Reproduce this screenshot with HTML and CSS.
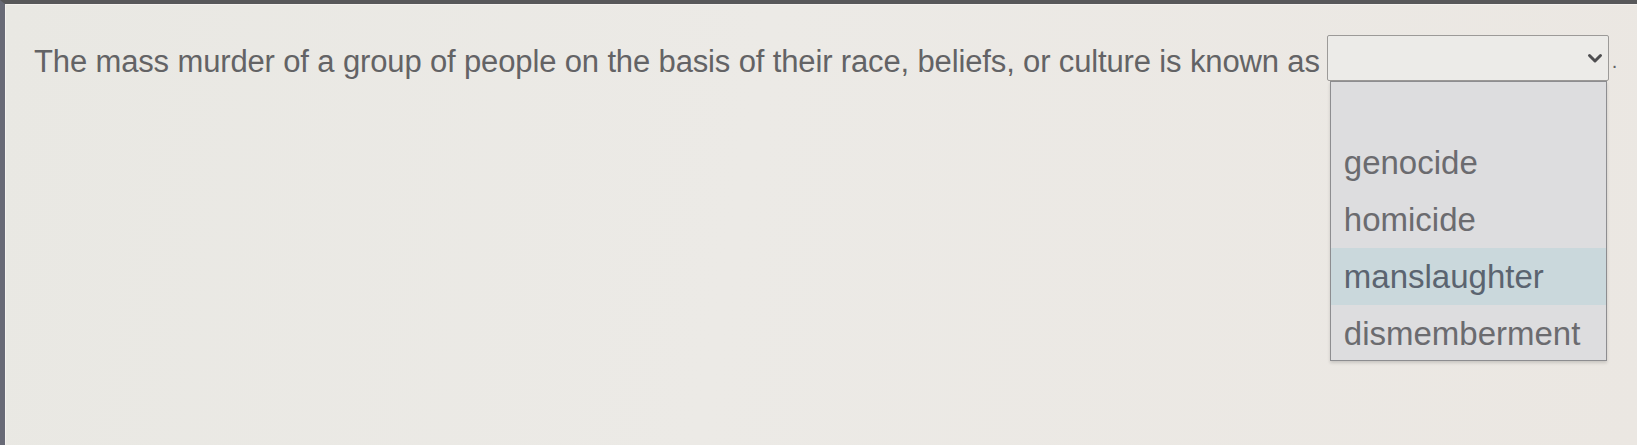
FILE: index.html
```html
<!DOCTYPE html>
<html lang="en">
<head>
  <meta charset="UTF-8" />
  <title>Question</title>
  <link rel="stylesheet" href="styles.css">
</head>
<body>
  <div class="frame">
    <div class="question">
      <span class="prompt">The mass murder of a group of people on the basis of their race, beliefs, or culture is known as</span>
      <div class="blank">
        <div class="dropdown">
          <span class="value"></span>
          <svg class="chevron" width="16" height="11" viewBox="0 0 16 11">
            <path d="M2.5 2.5l5.5 5.5 5.5-5.5" fill="none" stroke="#4e4e50" stroke-width="3" stroke-linecap="round" stroke-linejoin="round"/>
          </svg>
        </div>
        <ul class="options">
          <li class="option empty"></li>
          <li class="option">genocide</li>
          <li class="option">homicide</li>
          <li class="option active">manslaughter</li>
          <li class="option last">dismemberment</li>
        </ul>
      </div>
      <span class="stop">.</span>
    </div>
  </div>
</body>
</html>
```

FILE: styles.css
```css
html, body {
  margin: 0;
  height: 100%;
}

body {
  background: #e9e7e2;
  font-family: 'Liberation Sans', Arial, sans-serif;
  color: #636365;
}

.frame {
  height: 100%;
  box-sizing: border-box;
  border-top: 4px solid #58585a;
  border-left: 5px solid #686a76;
  box-shadow: inset 1px 1px 0 #f4f1ee;
  background: linear-gradient(100deg, #e9e8e3 0%, #eceae6 45%, #ebe7e2 100%);
}

.question {
  display: flex;
  align-items: center;
  padding: 31px 0 0 29px;
  font-size: 31px;
}

.prompt {
  letter-spacing: -0.14px;
  padding-top: 7px;
}

.blank {
  position: relative;
  margin-left: 7px;
}

.dropdown {
  width: 282px;
  height: 46px;
  box-sizing: border-box;
  border: 1px solid #9c9a98;
  border-radius: 2px;
  background: #ecebe8;
  display: flex;
  align-items: center;
  justify-content: flex-end;
  padding-right: 5px;
}

.chevron {
  display: block;
}

.stop {
  margin-left: 3px;
  align-self: flex-end;
  margin-bottom: 8px;
  font-size: 20px;
}

.options {
  position: absolute;
  top: 46px;
  left: 3px;
  width: 277px;
  margin: 0;
  padding: 0;
  list-style: none;
  box-sizing: border-box;
  border: 1px solid #8d8d90;
  background: #dddddf;
  box-shadow: 0 2px 3px rgba(0, 0, 0, 0.15);
}

.option {
  height: 57px;
  line-height: 57px;
  padding-left: 13px;
  font-size: 33px;
  color: #6b6b6f;
}

.option.empty {
  height: 52px;
}

.option.last {
  height: 55px;
}

.option.active {
  background: #cad8dc;
  color: #5b6470;
}
```
